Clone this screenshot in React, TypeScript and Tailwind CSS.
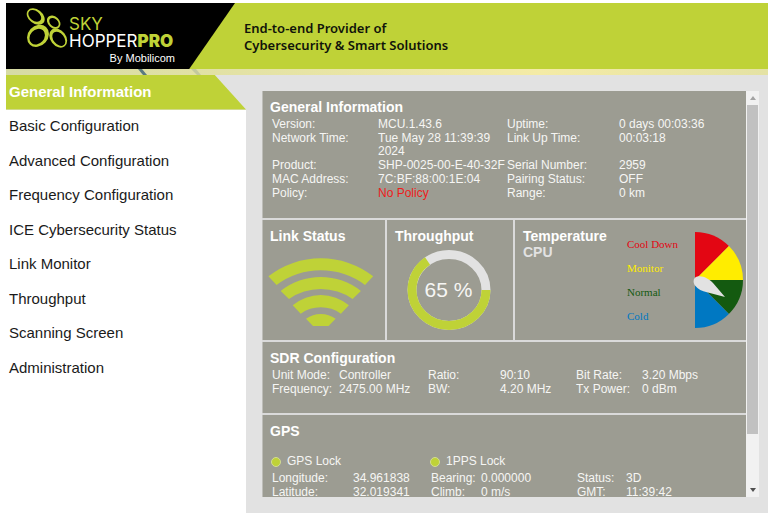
import { ReactNode } from "react";

const NAV = [
  "General Information",
  "Basic Configuration",
  "Advanced Configuration",
  "Frequency Configuration",
  "ICE Cybersecurity Status",
  "Link Monitor",
  "Throughput",
  "Scanning Screen",
  "Administration",
];

function Panel({ title, className = "", children }: { title: string; className?: string; children: ReactNode }) {
  return (
    <section className={`bg-[#9c9c92] pl-2 pt-2 ${className}`}>
      <h2 className="text-[14px] leading-4 font-bold text-white">{title}</h2>
      {children}
    </section>
  );
}

function DataTable({ widths, rows, label }: { widths: string[]; rows: string[][]; label: string }) {
  return (
    <table
      aria-label={label}
      className="table-fixed border-separate border-spacing-x-0 border-spacing-y-px text-[12px] leading-[13px] text-[#f6f6f4]"
    >
      <colgroup>
        {widths.map((w, i) => (
          <col key={i} className={w} />
        ))}
      </colgroup>
      <tbody>
        {rows.map((row) => (
          <tr key={row[0]} className="align-top">
            {row.map((cell, i) =>
              i % 2 === 0 ? (
                <th key={i} scope="row" className="p-0 text-left font-normal whitespace-nowrap">
                  {cell}
                </th>
              ) : (
                <td key={i} className={cell === "No Policy" ? "p-0 text-[#ee1c1c]" : "p-0"}>
                  {cell}
                </td>
              )
            )}
          </tr>
        ))}
      </tbody>
    </table>
  );
}

function LogoMark() {
  return (
    <svg viewBox="26 8 43 40" className="h-10 w-[43px] shrink-0" fill="#bfd237" fillRule="evenodd" aria-hidden="true">
      <g transform="translate(35.7 16.6) rotate(38)">
        <path d="M-10 0a10 7 0 1 0 20 0a10 7 0 1 0 -20 0zM-8.4 0a7.2 4.8 0 1 0 14.4 0a7.2 4.8 0 1 0 -14.4 0z" />
      </g>
      <g transform="translate(53.7 22.2) rotate(42)">
        <path d="M-7.6 0a7.6 5.7 0 1 0 15.2 0a7.6 5.7 0 1 0 -15.2 0zM-5 0a5.4 3.8 0 1 0 10.8 0a5.4 3.8 0 1 0 -10.8 0z" />
      </g>
      <g transform="translate(38 35.8) rotate(-48)">
        <path d="M-12 0a12 10 0 1 0 24 0a12 10 0 1 0 -24 0zM-9.8 0a8.6 6.9 0 1 0 17.2 0a8.6 6.9 0 1 0 -17.2 0z" />
      </g>
      <g transform="translate(58.2 38) rotate(52)">
        <path d="M-10.6 0a10.6 7.8 0 1 0 21.2 0a10.6 7.8 0 1 0 -21.2 0zM-7 0a8 5.4 0 1 0 16 0a8 5.4 0 1 0 -16 0z" />
      </g>
    </svg>
  );
}

function Header() {
  return (
    <header>
      <div className="flex h-[66px] bg-[#bfd237]">
        <div className="flex w-[229px] shrink-0 bg-black pt-[5px] pl-5 [clip-path:polygon(0_0,100%_0,80%_100%,0_100%)]">
          <LogoMark />
          <div className="flex w-[106px] flex-col pt-2 text-[17px] leading-[17px] whitespace-nowrap text-white">
            <span className="font-['Inter',sans-serif] text-[#bfd237]">SKY</span>
            <span className="font-['Inter',sans-serif]">
              HOPPER<b className="font-black text-[#bfd237]">PRO</b>
            </span>
            <span className="text-right text-[11px]">By Mobilicom</span>
          </div>
        </div>
        <p className="pt-[17px] pl-[9px] font-['Noto_Sans',sans-serif] text-[13px] leading-[17px] font-semibold whitespace-nowrap text-[#11140a]">
          End-to-end Provider of
          <br />
          Cybersecurity &amp; Smart Solutions
        </p>
      </div>
      <div className="h-1.5 bg-linear-to-r from-[#d6dba4] via-[#f4eba6] via-70% to-[#e4e2a4]">
        <svg viewBox="0 0 240 6" className="h-1.5 w-60" aria-hidden="true">
          <path d="M132 0h4l5 6h-4z" fill="#5a7a80" />
          <path d="M185 0h5l5 6h-4z" fill="#c3c99d" />
        </svg>
      </div>
    </header>
  );
}

function Sidebar() {
  return (
    <nav className="w-60 shrink-0 bg-white">
      <ul className="grid h-[311px] auto-rows-fr text-[15px]">
        {NAV.map((item, i) => (
          <li key={item} className={i === 0 ? "bg-[#e2e2e2]" : ""}>
            <a
              href="#"
              className={
                i === 0
                  ? "flex h-full items-center bg-[#bfd237] pb-px pl-[3px] font-bold text-white [clip-path:polygon(0_0,87%_0,100%_100%,0_100%)]"
                  : "flex h-full items-center pb-px pl-[3px] text-[#1a1a1a]"
              }
            >
              {item}
            </a>
          </li>
        ))}
      </ul>
    </nav>
  );
}

function SignalIcon() {
  return (
    <svg viewBox="268 258 106 69" className="mt-[14px] -ml-0.5 h-[69px] w-[106px]" fill="#bfd237" role="img" aria-label="Link strength">
      <path d="M268.4 276.3A85.3 85.3 0 0 1 373.2 276.3L365 284.9A74 74 0 0 0 276.6 284.9Z" />
      <path d="M280.7 291A64.5 64.5 0 0 1 360.9 291L352.6 299A55.6 55.6 0 0 0 289 299Z" />
      <path d="M292.7 305.3A43.5 43.5 0 0 1 348.9 305.3L340.9 313.7A34.8 34.8 0 0 0 300.7 313.7Z" />
      <path d="M306 318.7A25.6 25.6 0 0 1 335.6 318.7L328.6 326H313Z" />
    </svg>
  );
}

function ThroughputRing() {
  return (
    <div className="mt-1.5 grid w-[107px] place-items-center pb-1.5">
      <svg viewBox="0 0 84 80" className="col-start-1 row-start-1 h-20 w-[84px]" fill="none" strokeWidth="9" aria-hidden="true">
        <ellipse cx="42" cy="40" rx="37" ry="35.5" stroke="#e2e2e2" />
        <ellipse cx="42" cy="40" rx="37" ry="35.5" stroke="#bfd237" pathLength="100" strokeDasharray="65 35" />
      </svg>
      <span className="col-start-1 row-start-1 text-[21px] leading-6 text-[#f6f6f4]">65 %</span>
    </div>
  );
}

function TemperatureGauge() {
  return (
    <svg viewBox="693 232 50 96" className="h-24 w-[50px]" role="img" aria-label="CPU temperature">
      <path d="M695 280V232A48 48 0 0 1 728.9 246.1Z" fill="#e30613" />
      <path d="M695 280L728.9 246.1A48 48 0 0 1 743 280Z" fill="#ffed00" />
      <path d="M695 280H743A48 48 0 0 1 728.9 313.9Z" fill="#145a10" />
      <path d="M695 280L728.9 313.9A48 48 0 0 1 695 328Z" fill="#0078c2" />
      <path d="M695 285.5C692 281 694 276.5 698.5 276.3C704 276 709 279 713 283L725 297L707 292.3C702 291 698 289.5 695 285.5Z" fill="#e2e2e2" />
    </svg>
  );
}

function Lock({ label }: { label: string }) {
  return (
    <span className="flex w-[159px] items-center gap-1.5">
      <span className="size-2.5 rounded-full border border-[#d3dc94] bg-[#bfd237]" />
      {label}
    </span>
  );
}

function ScrollBar() {
  return (
    <div className="flex w-[13px] shrink-0 flex-col bg-[#f1f1f1]">
      <button aria-label="Scroll up" className="grid h-[14px] place-items-center">
        <svg viewBox="0 0 6 4" className="h-1 w-1.5" fill="#a3a3a3">
          <path d="M0 4L3 0L6 4Z" />
        </svg>
      </button>
      <div className="flex-1 px-px">
        <div className="h-[87%] bg-[#c1c1c1]" />
      </div>
      <button aria-label="Scroll down" className="grid h-[14px] place-items-center">
        <svg viewBox="0 0 6 4" className="h-1 w-1.5" fill="#505050">
          <path d="M0 0L3 4L6 0Z" />
        </svg>
      </button>
    </div>
  );
}

const EDGE = "shadow-[inset_1px_0_0_#bdbdb8]";

export default function App() {
  return (
    <div className="flex h-screen flex-col bg-white pt-[3px] pb-px pl-1.5 font-['Liberation_Sans',Arial,sans-serif]">
      <Header />
      <div className="flex min-h-0 flex-1 bg-[#e2e2e2]">
        <Sidebar />
        <main className="flex min-w-0 flex-1 py-4 pr-[9px] pl-4">
          <div className="flex min-w-0 flex-1 flex-col gap-0.5 overflow-hidden bg-[#dadada]">
            <Panel title="General Information" className={`shrink-0 pb-[17px] ${EDGE}`}>
              <div className="pt-0.5 pl-0.5">
                <DataTable
                  label="General information"
                  widths={["w-[106px]", "w-[129px]", "w-[112px]", "w-[120px]"]}
                  rows={[
                    ["Version:", "MCU.1.43.6", "Uptime:", "0 days 00:03:36"],
                    ["Network Time:", "Tue May 28 11:39:39 2024", "Link Up Time:", "00:03:18"],
                    ["Product:", "SHP-0025-00-E-40-32F", "Serial Number:", "2959"],
                    ["MAC Address:", "7C:BF:88:00:1E:04", "Pairing Status:", "OFF"],
                    ["Policy:", "No Policy", "Range:", "0 km"],
                  ]}
                />
              </div>
            </Panel>
            <div className="grid min-h-[120px] shrink-0 grid-cols-[123fr_126fr_231fr] gap-0.5">
              <Panel title="Link Status" className={EDGE}>
                <SignalIcon />
              </Panel>
              <Panel title="Throughput">
                <ThroughputRing />
              </Panel>
              <section className="flex justify-between bg-[#9c9c92] pr-[3px] pl-2">
                <h2 className="pt-2 text-[14px] leading-4 font-bold text-white">
                  Temperature
                  <span className="block text-[#e2e2e2]">CPU</span>
                </h2>
                <div className="flex gap-4 pt-3">
                  <ul className="w-[50px] font-['Liberation_Serif',serif] text-[11px] leading-6 whitespace-nowrap">
                    <li className="text-[#e30613]">Cool Down</li>
                    <li className="text-[#ffed00]">Monitor</li>
                    <li className="text-[#145a10]">Normal</li>
                    <li className="text-[#0078c2]">Cold</li>
                  </ul>
                  <TemperatureGauge />
                </div>
              </section>
            </div>
            <Panel title="SDR Configuration" className={`shrink-0 pb-4 ${EDGE}`}>
              <div className="pt-0.5 pl-0.5">
                <DataTable
                  label="SDR configuration"
                  widths={["w-[67px]", "w-[89px]", "w-[72px]", "w-[76px]", "w-[66px]", "w-[90px]"]}
                  rows={[
                    ["Unit Mode:", "Controller", "Ratio:", "90:10", "Bit Rate:", "3.20 Mbps"],
                    ["Frequency:", "2475.00 MHz", "BW:", "4.20 MHz", "Tx Power:", "0 dBm"],
                  ]}
                />
              </div>
            </Panel>
            <Panel title="GPS" className={`flex-1 ${EDGE}`}>
              <div className="flex pt-4 pb-[3px] pl-px text-[12px] leading-[13px] text-[#f6f6f4]">
                <Lock label="GPS Lock" />
                <Lock label="1PPS Lock" />
              </div>
              <div className="pl-0.5">
                <DataTable
                  label="GPS"
                  widths={["w-[81px]", "w-[78px]", "w-[50px]", "w-[96px]", "w-[49px]", "w-[90px]"]}
                  rows={[
                    ["Longitude:", "34.961838", "Bearing:", "0.000000", "Status:", "3D"],
                    ["Latitude:", "32.019341", "Climb:", "0 m/s", "GMT:", "11:39:42"],
                  ]}
                />
              </div>
            </Panel>
          </div>
          <ScrollBar />
        </main>
      </div>
    </div>
  );
}
